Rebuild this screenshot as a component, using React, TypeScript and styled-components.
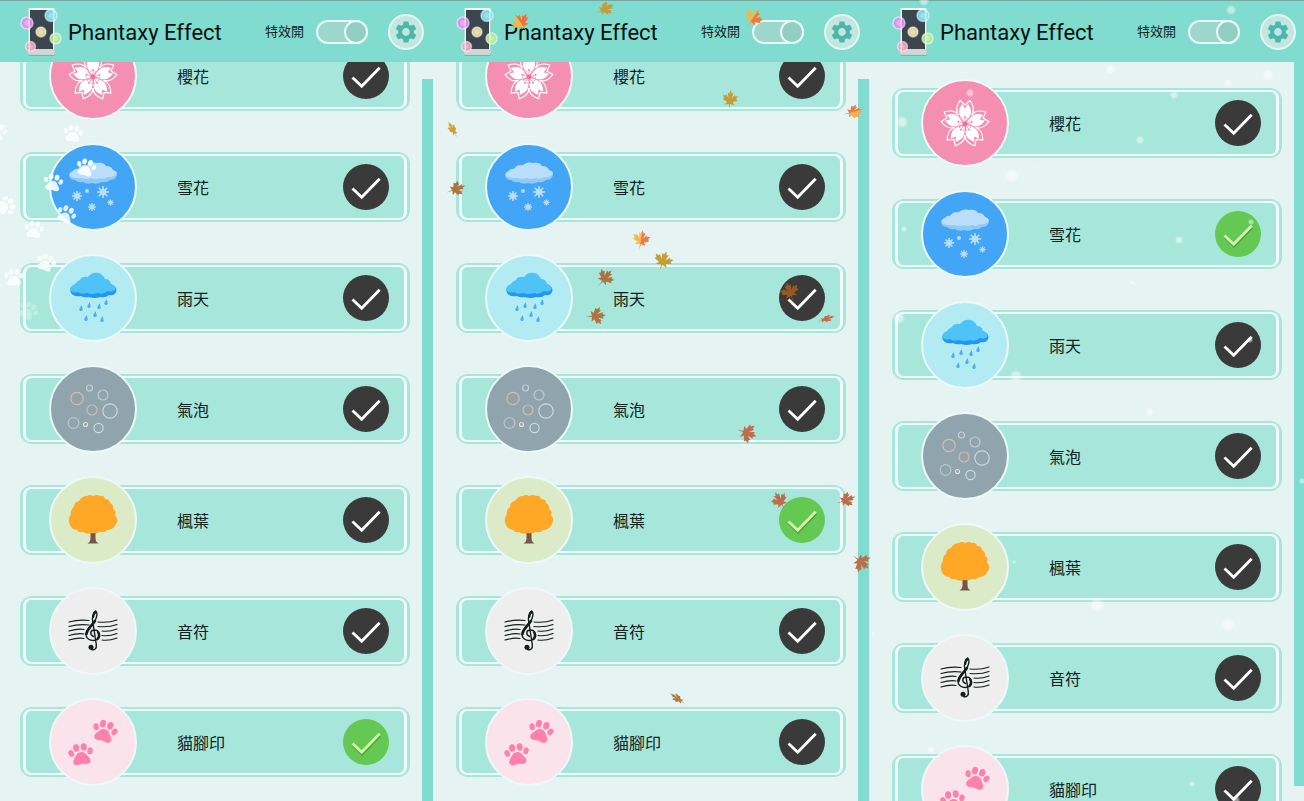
import React, { useState } from "react";
import styled, { createGlobalStyle } from "styled-components";
import { MdSettings } from "react-icons/md";

const GlobalStyle = createGlobalStyle`
  *, *::before, *::after { box-sizing: border-box; }
  body {
    margin: 0;
    background: #e5f3f2;
    color: #10211f;
    font-family: Roboto, "Noto Sans CJK TC", sans-serif;
  }
`;

const Page = styled.main`
  display: grid;
  grid-template-columns: 109fr 109fr 108fr;
  height: 100vh;
  overflow: hidden;
`;

const Screen = styled.section`
  position: relative;
  display: flex;
  flex-direction: column;
  min-width: 0;
  min-height: 0;
  overflow: hidden;
`;

const Header = styled.header<{ $last: boolean }>`
  display: flex;
  align-items: center;
  flex: none;
  height: 62px;
  padding: 0 ${(p) => (p.$last ? 8 : 12)}px 0 20px;
  border-top: 1px solid #74a8a1;
  background: #7fdccf;
`;

const Title = styled.h1`
  flex: 1;
  margin: 0 0 0 5px;
  padding-top: 2px;
  color: #06100f;
  font-size: 22px;
  font-weight: 400;
  line-height: 28px;
  white-space: nowrap;
`;

const SwitchLabel = styled.label`
  display: flex;
  align-items: center;
  gap: 12px;
  font-size: 13px;
  line-height: 20px;
  white-space: nowrap;
`;

const Switch = styled.input`
  display: flex;
  justify-content: flex-end;
  appearance: none;
  width: 52px;
  height: 24px;
  margin: 0;
  border: 2px solid #e9f9f6;
  border-radius: 12px;
  background: #9dd6cc;
  cursor: pointer;

  &::before {
    content: "";
    width: 24px;
    height: 24px;
    margin: -2px;
    border: 2px solid #e9f9f6;
    border-radius: 50%;
    background: #93cec4;
  }

  &:not(:checked) {
    justify-content: flex-start;
  }
`;

const SettingsButton = styled.button`
  display: grid;
  place-items: center;
  width: 36px;
  height: 36px;
  margin: 0 0 0 20px;
  padding: 0;
  border: 2px solid #e2f5f2;
  border-radius: 50%;
  background: #c3e6e0;
  color: #4db6ac;
  cursor: pointer;
`;

const Body = styled.div`
  display: flex;
  flex: 1;
  min-height: 0;
  overflow: hidden;
`;

const List = styled.ul<{ $scrolled: boolean }>`
  flex: 1;
  min-width: 0;
  margin: ${(p) => (p.$scrolled ? -47 : 0)}px 0 0;
  padding: 26px 12px 0 20px;
  list-style: none;
`;

const Row = styled.li`
  margin-bottom: 41px;
  padding: 2px 3px;
  height: 70px;
  border-radius: 12px;
  background: #a7e6da;
`;

const RowInner = styled.div`
  display: flex;
  align-items: center;
  height: 66px;
  padding: 0 15px 0 23px;
  border: solid #f1fcfa;
  border-width: 2px 3px;
  border-radius: 8px;
`;

const Avatar = styled.span<{ $color: string }>`
  flex: none;
  width: 88px;
  height: 88px;
  border: 2px solid #edf9f8;
  border-radius: 50%;
  background: ${(p) => p.$color};

  svg {
    display: block;
    margin: -2px;
  }
`;

const Name = styled.span`
  flex: 1;
  margin-left: 40px;
  padding-top: 4px;
  font-size: 16px;
  line-height: 24px;
`;

const Tick = styled.label`
  display: grid;
  flex: none;
  cursor: pointer;

  > * {
    grid-area: 1 / 1;
  }
`;

const Radio = styled.input`
  appearance: none;
  width: 46px;
  height: 46px;
  margin: 0;
  border-radius: 50%;
  background: #3a3a3a;

  &:checked {
    background: #64c853;
  }
`;

const TickMark = styled.svg`
  width: 46px;
  height: 46px;
  pointer-events: none;
`;

const Track = styled.div<{ $last: boolean; $scrolled: boolean }>`
  flex: none;
  width: ${(p) => (p.$last ? 10 : 11)}px;
  margin-right: ${(p) => (p.$last ? 0 : 3)}px;
  padding-top: ${(p) => (p.$scrolled ? 17 : 0)}px;
`;

const Thumb = styled.div<{ $scrolled: boolean }>`
  height: ${(p) => (p.$scrolled ? 100 : 98)}%;
  background: #80dcd0;
`;

const Overlay = styled.svg`
  position: absolute;
  inset: 0;
  width: 100%;
  height: 100%;
  pointer-events: none;
`;

function Logo() {
  const bubbles: [number, number, number, string][] = [
    [7, 15, 6, "#e58df2"],
    [31, 7.5, 6, "#86e2f3"],
    [21, 24, 5, "#efe0a4"],
    [35.5, 30.5, 5.5, "#b4ee94"],
    [10.5, 38.5, 5, "#f1a3bd"],
  ];
  return (
    <svg width="43" height="50" viewBox="0 -1 43 50" aria-hidden="true">
      <rect x="8.5" y="3" width="26.5" height="45" rx="1.5" fill="#62aaa1" opacity=".7" />
      <rect x="8.5" y="0" width="26" height="46.5" rx="1" fill="#f4f7f7" />
      <rect x="8.5" y="41" width="26" height="5.5" fill="#d3d4d4" />
      <rect x="10" y="2" width="23" height="39" fill="#3b464f" />
      {bubbles.map(([x, y, r, c]) => (
        <g key={c}>
          <circle cx={x} cy={y} r={r} fill={c} fillOpacity=".92" stroke="#fff" strokeOpacity=".5" strokeWidth="1.5" />
          <circle cx={x} cy={y} r={r * 0.45} fill="#fff" opacity=".25" />
        </g>
      ))}
      <path d="M9.2 9V21 M33.8 1V13 M33.8 25V35 M9.2 33V43" stroke="#fff" strokeWidth="1" opacity=".8" />
    </svg>
  );
}

function Sakura() {
  return (
    <g transform="translate(44 45)">
      {[0, 72, 144, 216, 288].map((a) => (
        <g key={a} transform={`rotate(${a})`}>
          <path
            d="M-6.5 -9 C-9.5 -13 -9.5 -17 -5 -23.5 L0 -19 L5 -23.5 C9.5 -17 9.5 -13 6.5 -9"
            fill="none"
            stroke="#fff"
            strokeWidth="1.2"
            strokeLinejoin="round"
          />
          <path d="M0 -1 C-3 -5 -6.500 -9 -6 -13 C-5.500 -16 -4.500 -17.500 -3 -20 L0 -15.500 L3 -20 C4.500 -17.500 5.500 -16 6 -13 C6.500 -9 3 -5 0 -1Z" fill="#fff" />
          <path d="M0 -1V-6" stroke="#f48fb1" strokeWidth=".8" />
          <circle cx="0" cy="-7" r=".9" fill="#ec6f9b" />
          <circle cx="-2.2" cy="-6" r=".5" fill="#ec6f9b" />
          <circle cx="2.2" cy="-6" r=".5" fill="#ec6f9b" />
          <path d="M0 -1L3.5 -5.5" stroke="#f48fb1" strokeWidth="1.2" />
        </g>
      ))}
      <circle r="2.4" fill="#f06f9d" />
    </g>
  );
}

function Flake({ x, y, r }: { x: number; y: number; r: number }) {
  return (
    <g transform={`translate(${x} ${y})`} stroke="#bbdefb" strokeWidth={r > 4 ? 1.6 : 1.3}>
      {[0, 45, 90, 135].map((a) => (
        <path key={a} d={`M${-r} 0H${r}`} transform={`rotate(${a})`} />
      ))}
      <circle r={r * 0.55} fill="#bbdefb" stroke="none" />
    </g>
  );
}

function SnowCloud() {
  return (
    <g>
      <path
        d="M26 37 C20 37 19 32 22 30 Q25 26 29 26 Q33 21 38 22 Q43 19 48 20 Q54 19 57 23 Q62 23 64 27 Q70 31 67 34 Q66 37 61 37 Q58 40 53 39 Q48 42 43 40 Q38 42 34 39 Q29 40 26 37Z"
        fill="#90caf9"
      />
      <path
        d="M23 34 C19 33 20 29 24 28 Q26 25 29 26 Q32 21 37 23 Q42 18 48 20 Q54 19 57 23 Q62 23 64 27 Q70 29 67 32 Q63 35 59 34 Q55 37 51 35 Q46 37 42 35 Q38 37 33 35 Q28 36 23 34Z"
        fill="#bbdefb"
      />
      <Flake x={28} y={53} r={5} />
      <Flake x={38} y={48} r={2} />
      <Flake x={54} y={49} r={6} />
      <Flake x={43} y={64} r={4} />
      <Flake x={61.5} y={59.5} r={3} />
    </g>
  );
}

function RainCloud() {
  const drops = [[32, 54], [40, 51], [50, 52], [57, 48], [46, 60], [37, 64], [53, 65]];
  return (
    <g>
      <path
        d="M24 41 Q20 38 22 34 L27 31 L62 30 Q69 33 67 38 Q65 42 60 41 Q57 44 51 43 Q46 45 40 43 Q35 44 32 42 Q27 43 24 41Z"
        fill="#2196f3"
      />
      <path
        d="M24 38 C20 37 20 32 26 30 Q28 27 31 26 Q33 22 39 23 C43 17 53 17 56 25 Q61 25 62 30 Q68 32 66 36 Q63 39 59 37 Q54 41 49 39 Q43 41 38 39 Q32 41 29 38 Q26 39 24 38Z"
        fill="#4fc3f7"
      />
      {drops.map(([x, y]) => (
        <path
          key={x}
          transform={`translate(${x} ${y})`}
          d="M.7 -3 C-.3 -1 -1.7 0 -1.7 1.4 A1.700 1.700 0 0 0 1.700 1.400 C1.700 0 .9 -1 .7 -3Z"
          fill="#45b2f3"
        />
      ))}
    </g>
  );
}

function Bubbles() {
  const rings: [number, number, number, string][] = [
    [40.5, 23, 3, "#c3cfd4"],
    [54, 30, 5, "#bccdcf"],
    [28, 33.5, 6.2, "#dcb9b2"],
    [43, 45, 5, "#d6b8b3"],
    [61, 46, 7.2, "#ccd8dc"],
    [24.5, 58, 5.4, "#b9c8ce"],
    [36.5, 59.5, 2, "#ebdcd7"],
    [49.5, 63, 4.6, "#c2e0de"],
  ];
  return (
    <g fill="none" strokeWidth="1.2">
      {rings.map(([x, y, r, c]) => (
        <circle key={x} cx={x} cy={y} r={r} stroke={c} />
      ))}
    </g>
  );
}

function Tree() {
  return (
    <g>
      <path d="M41.500 54H46.500V62Q46.500 66 49.500 67.500H38.500Q41.500 66 41.500 62Z" fill="#795548" />
      <path
        d="M38 20 Q41 18 44 20 Q48 18 51 20 Q55 19 56 23 Q61 23 61 27 Q65 29 64 33 Q68 35 66 39 Q70 44 67 48 Q64 54 58 54 Q56 57 51 56 Q47 58 42 57 Q38 59 34 56 Q30 57 28 54 Q21 53 20 46 Q19 42 22 38 Q21 34 25 31 Q25 26 30 25 Q33 20 38 20Z"
        fill="#ffa726"
      />
    </g>
  );
}

function Clef() {
  return (
    <g fill="none" stroke="#161c1c" strokeLinecap="round">
      {[35, 39.5, 44, 48.5, 53].map((y) => (
        <g key={y} strokeWidth="1.2">
          <path d={`M20 ${y} Q29 ${y - 2.5} ${y > 42 ? 35 : 40} ${y - 1.5}`} />
          <path d={`M${y > 42 ? 53 : 49} ${y} Q60 ${y + 1} 68 ${y - 2}`} />
        </g>
      ))}
      <path
        d="M44.500 49.500 C40.500 48 41 43 45.500 43 C50.500 43 52 49.500 49 52 C45 55 37.500 53.500 37 47.500 C36.500 42 42.500 38.500 45.500 34.500 C48.500 30 48.500 25 46.800 24 C43.500 25.500 43 31 43.800 35 L47.300 57.500 C48 62 45 63.500 42.500 62.500"
        strokeWidth="1.4"
      />
      <path d="M37.500 47 C38.500 41.500 43 38.500 46 34" strokeWidth="2.600" />
      <path d="M49.200 45.500 Q51.200 49 48.500 52" strokeWidth="2.400" />
      <path d="M46.500 25.500 Q44.500 27 44.300 30" strokeWidth="2" />
      <circle cx="42" cy="60.300" r="2.500" fill="#161c1c" stroke="none" />
    </g>
  );
}

function Paw({ x, y, turn, scale = 1 }: { x: number; y: number; turn: number; scale?: number }) {
  return (
    <g transform={`translate(${x} ${y}) rotate(${turn}) scale(${scale})`}>
      <path d="M0 -3 C4.500 -3 5 0 8 3.500 C11 7.500 8 11 4 10 Q0 9 -4 10 C-8 11 -11 7.500 -8 3.500 C-5 0 -4.500 -3 0 -3Z" />
      <ellipse cx="-10" cy="-3" rx="2.800" ry="3.700" transform="rotate(-20 -10 -3)" />
      <ellipse cx="-4" cy="-8" rx="3.200" ry="4" />
      <ellipse cx="4" cy="-8" rx="3.200" ry="4" />
      <ellipse cx="10" cy="-3" rx="2.800" ry="3.700" transform="rotate(20 10 -3)" />
    </g>
  );
}

function PawPair() {
  return (
    <g fill="#ff80ab">
      <Paw x={55.5} y={34} turn={16} scale={0.95} />
      <Paw x={32} y={57} turn={-8} scale={0.95} />
    </g>
  );
}

const effects = [
  { name: "櫻花", color: "#f48fb1", Art: Sakura },
  { name: "雪花", color: "#42a5f5", Art: SnowCloud },
  { name: "雨天", color: "#b2ebf2", Art: RainCloud },
  { name: "氣泡", color: "#90a4ae", Art: Bubbles },
  { name: "楓葉", color: "#dcebc7", Art: Tree },
  { name: "音符", color: "#eeeeee", Art: Clef },
  { name: "貓腳印", color: "#fae3eb", Art: PawPair },
];

function FallingPaws() {
  const paws: [number, number, number, number][] = [
    [-3, 132, 20, 0.95],
    [73, 134, 8, 0.95],
    [86, 168, 15, 0.95],
    [53, 183, 10, 0.9],
    [66, 215, 25, 0.85],
    [6, 206, 70, 0.95],
    [34, 230, 8, 0.95],
    [46, 263, 20, 0.85],
    [14, 278, 0, 0.95],
    [28, 311, 30, 0.3],
  ];
  return (
    <g fill="#fbfffe">
      {paws.map(([x, y, turn, opacity]) => (
        <g key={`${x}-${y}`} opacity={opacity}>
          <Paw x={x} y={y} turn={turn} scale={0.75} />
        </g>
      ))}
    </g>
  );
}

const HALF_LEAF = "M0 10 L0 -10 L1.500 -6.500 L3.500 -7.500 L2 -1.500 L5.500 -5.500 L6 -4 L9.500 -4.500 L7.500 -1.500 L9 0 L3.500 2 L6 5 L.6 4Z";
const LEAF = `${HALF_LEAF} M0 10 L0 -10 L-1.500 -6.500 L-3.500 -7.500 L-2 -1.500 L-5.500 -5.500 L-6 -4 L-9.500 -4.500 L-7.500 -1.500 L-9 0 L-3.500 2 L-6 5 L-.6 4Z`;

interface Leaf {
  x: number;
  y: number;
  turn: number;
  fill: string;
  half?: string;
  flat?: number;
}

function FallingLeaves() {
  const gold = "#c69c37";
  const brown = "#ad7442";
  const rust = "#bd6d49";
  const leaves: Leaf[] = [
    { x: 85, y: 23, turn: -35, fill: "#f1b84b", half: "#ec713e" },
    { x: 169, y: 9, turn: 65, fill: gold, flat: 0.7 },
    { x: 317, y: 18, turn: 35, fill: "#f0b84b", half: "#ed7944" },
    { x: 294, y: 100, turn: 5, fill: gold, flat: 0.8 },
    { x: 417, y: 112, turn: 75, fill: "#ed7944", half: "#f0b14a", flat: 0.7 },
    { x: 17, y: 130, turn: -30, fill: "#ce9e3d", flat: 0.4 },
    { x: 20, y: 189, turn: 70, fill: brown, flat: 0.75 },
    { x: 205, y: 240, turn: 10, fill: "#f2bb51", half: "#ee7950", flat: 0.9 },
    { x: 227, y: 261, turn: 20, fill: gold },
    { x: 169, y: 278, turn: 40, fill: brown, flat: 0.9 },
    { x: 160, y: 316, turn: 85, fill: brown, flat: 0.9 },
    { x: 354, y: 292, turn: -20, fill: "#965923" },
    { x: 390, y: 319, turn: 72, fill: "#c46b43", flat: 0.35 },
    { x: 311, y: 433, turn: 110, fill: rust },
    { x: 344, y: 501, turn: -30, fill: rust, flat: 0.85 },
    { x: 410, y: 500, turn: 70, fill: rust, flat: 0.75 },
    { x: 425, y: 562, turn: 130, fill: rust },
    { x: 242, y: 699, turn: -55, fill: "#b57c42", flat: 0.4 },
  ];
  return (
    <g>
      {leaves.map((l) => (
        <g key={`${l.x}-${l.y}`} transform={`translate(${l.x} ${l.y}) rotate(${l.turn}) scale(${l.flat ?? 1} 1)`}>
          <path d={LEAF} fill={l.fill} />
          {l.half && <path d={HALF_LEAF} fill={l.half} />}
        </g>
      ))}
    </g>
  );
}

function FallingSnow() {
  const flakes = [
    [359, 10, 5], [52, 1, 5], [238, 69, 5], [396, 75, 6], [356, 83, 4], [302, 95, 4], [30, 122, 6],
    [268, 140, 4], [98, 93, 4], [140, 176, 7], [165, 167, 1], [11, 221, 1], [32, 229, 3], [307, 240, 4],
    [379, 222, 3], [261, 283, 2], [27, 318, 6], [144, 376, 6], [278, 412, 4], [378, 340, 3], [430, 481, 3],
    [142, 562, 2], [225, 605, 7], [356, 625, 7], [0, 634, 3], [59, 750, 4], [320, 784, 3], [364, 800, 4],
  ];
  return (
    <g>
      <radialGradient id="flake">
        <stop offset=".5" stopColor="#fff" stopOpacity=".5" />
        <stop offset="1" stopColor="#fff" stopOpacity="0.1" />
      </radialGradient>
      {flakes.map(([x, y, r]) => (
        <circle key={`${x}-${y}`} cx={x} cy={y} r={r} fill="url(#flake)" />
      ))}
    </g>
  );
}

interface PhoneProps {
  id: string;
  initial: number;
  scrolled?: boolean;
  last?: boolean;
  Falling: () => React.JSX.Element;
}

function Phone({ id, initial, scrolled = false, last = false, Falling }: PhoneProps) {
  const [selected, setSelected] = useState(initial);
  return (
    <Screen>
      <Header $last={last}>
        <Logo />
        <Title>Phantaxy Effect</Title>
        <SwitchLabel>
          特效開
          <Switch type="checkbox" role="switch" defaultChecked />
        </SwitchLabel>
        <SettingsButton type="button" aria-label="設定">
          <MdSettings size={26} />
        </SettingsButton>
      </Header>
      <Body>
        <List $scrolled={scrolled}>
          {effects.map(({ name, color, Art }, i) => (
            <Row key={name}>
              <RowInner>
                <Avatar $color={color}>
                  <svg width="88" height="88" viewBox="0 0 88 88" aria-hidden="true">
                    <Art />
                  </svg>
                </Avatar>
                <Name id={`${id}-${i}`}>{name}</Name>
                <Tick>
                  <Radio
                    type="radio"
                    name={id}
                    aria-labelledby={`${id}-${i}`}
                    checked={selected === i}
                    onChange={() => setSelected(i)}
                  />
                  <TickMark viewBox="0 0 46 46" fill="none" strokeWidth="2.8" strokeLinecap="square">
                    {selected === i && <path d="M11 27L19 35L36 17.5" stroke="#4b9d41" />}
                    <path d="M10.5 25.5L18.7 33.3L35.7 15.8" stroke={selected === i ? "#d2f9a8" : "#fff"} />
                  </TickMark>
                </Tick>
              </RowInner>
            </Row>
          ))}
        </List>
        <Track $last={last} $scrolled={scrolled}>
          <Thumb $scrolled={scrolled} />
        </Track>
      </Body>
      <Overlay aria-hidden="true">
        <Falling />
      </Overlay>
    </Screen>
  );
}

export default function App() {
  return (
    <>
      <GlobalStyle />
      <Page>
        <Phone id="paws" initial={6} scrolled Falling={FallingPaws} />
        <Phone id="maple" initial={4} scrolled Falling={FallingLeaves} />
        <Phone id="snow" initial={1} last Falling={FallingSnow} />
      </Page>
    </>
  );
}
